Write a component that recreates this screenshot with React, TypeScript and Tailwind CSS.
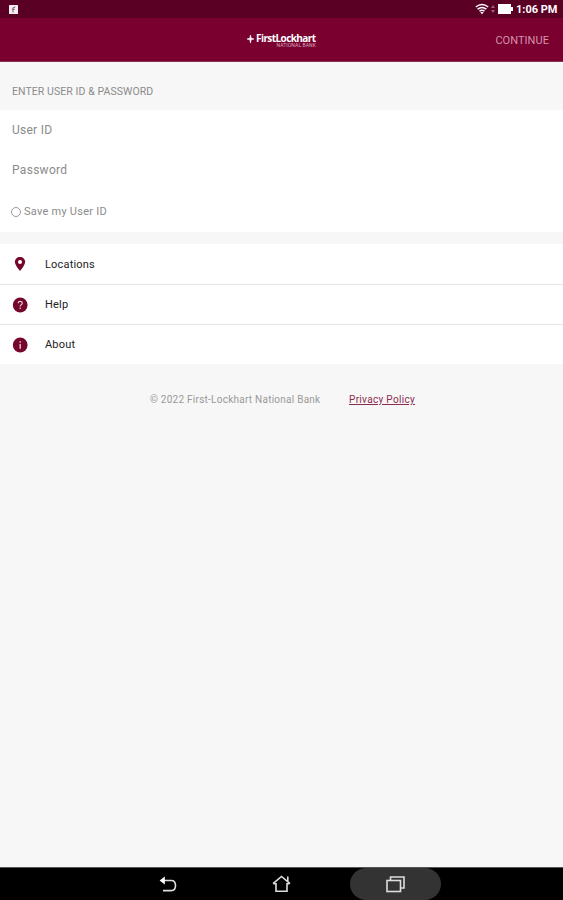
import type { ReactNode } from "react";

function StatusBar() {
  return (
    <div className="flex h-[18px] shrink-0 items-center bg-[#5a0024] pl-[9px] pr-[6px] text-white">
      <svg width="9" height="9" viewBox="0 0 9 9">
        <rect width="9" height="9" rx="0.5" fill="#f7eef2" />
        <path d="M4 7.5V3.2Q4 2.2 6.3 2.2M2.8 4.4H5.7" stroke="#8a7780" strokeWidth="1.2" fill="none" />
      </svg>
      <svg className="ml-auto" width="14" height="12" viewBox="0 0 14 12" fill="none" stroke="#fff" strokeWidth="1.5">
        <path d="M0.8 4Q7-0.8 13.2 4M2.6 6.1Q7 2.7 11.4 6.1M4.5 8.2Q7 6.4 9.5 8.2" />
        <path d="M5.3 9H8.7L7 11.5Z" fill="#fff" stroke="none" />
      </svg>
      <svg className="ml-[2px]" width="4" height="10" viewBox="0 0 4 10" fill="#a0607c">
        <path d="M0 4L2 1L4 4ZM0 6H4L2 9Z" />
      </svg>
      <svg className="ml-[3px]" width="15" height="10" viewBox="0 0 15 10" fill="#fff">
        <path d="M0 0H13V3H15V7H13V10H0Z" />
      </svg>
      <span className="ml-[3px] w-[41px] whitespace-nowrap text-[11px] font-bold leading-none tracking-[0px]">1:06 PM</span>
    </div>
  );
}

function Header() {
  return (
    <header className="grid h-[44px] shrink-0 grid-cols-[1fr_69px_1fr] items-center border-b border-[#8b3152] bg-[#7a0030]">
      <div className="col-start-2 flex items-start gap-[2px]">
        <svg className="mt-[2px] shrink-0" width="7" height="8" viewBox="0 0 7 8">
          <path d="M3.5 0L4.2 3.3L7 4L4.2 4.7L3.5 8L2.8 4.7L0 4L2.8 3.3Z" fill="#fff" stroke="#fff" strokeWidth="0.6" />
        </svg>
        <div className="flex w-[60px] flex-col">
          <span className="whitespace-nowrap font-['Open_Sans',sans-serif] text-[10px] font-bold leading-[10px] tracking-[-0.58px] text-white">FirstLockhart</span>
          <span className="self-end whitespace-nowrap text-[5px] leading-[4px] tracking-[0.1px] text-[#d9a9bd]">NATIONAL BANK</span>
        </div>
      </div>
      <button className="justify-self-end whitespace-nowrap pr-[14px] pt-[2px] text-[11px] leading-none tracking-[0.05px] text-[#d493ad]">CONTINUE</button>
    </header>
  );
}

function Row({ icon, label, size }: { icon: ReactNode; label: string; size: string }) {
  return (
    <a className={`flex items-center bg-white pl-[12px] ${size}`}>
      <span className="flex w-[16px] justify-center">{icon}</span>
      <span className="ml-[17px] text-[11px] leading-none tracking-[0.18px] text-[#222]">{label}</span>
    </a>
  );
}

function Pin() {
  return (
    <svg width="12" height="16" viewBox="0 0 12 16">
      <path d="M6 1C3 1 0.9 3.1 0.9 6C0.9 9.3 6 15 6 15S11.1 9.3 11.1 6C11.1 3.1 9 1 6 1Z" fill="#75072d" />
      <circle cx="6" cy="5.9" r="2" fill="#fff" />
    </svg>
  );
}

function Question() {
  return (
    <svg width="16" height="16" viewBox="0 0 16 16">
      <circle cx="8.2" cy="8" r="7.4" fill="#75072d" />
      <path d="M6.1 6.2Q6.2 4.3 8.2 4.3T10.3 6.1Q10.3 7.2 9.2 7.8Q8.2 8.4 8.2 9.5M8.2 10.6V12" stroke="#e6c8d3" strokeWidth="1.2" fill="none" />
    </svg>
  );
}

function Info() {
  return (
    <svg width="16" height="16" viewBox="0 0 16 16">
      <circle cx="8.2" cy="8" r="7.4" fill="#75072d" />
      <path d="M8.2 4.3V5.7M8.2 7V11.7" stroke="#e6c8d3" strokeWidth="1.4" />
    </svg>
  );
}

function NavBar() {
  return (
    <nav className="grid h-[33px] shrink-0 grid-cols-[122px_91px_137px_91px_1fr] border-t border-[#555] bg-black">
      <button className="col-start-2 flex items-center justify-center">
        <svg width="18" height="17" viewBox="0 0 18 17" fill="none" stroke="#ddd" strokeWidth="1.6">
          <path d="M4 4.5H12.2Q16.5 4.5 16.5 9.5Q16.5 14.6 12.2 14.6H4" />
          <path d="M5.8 0.6L0.6 4.5L5.8 8.4Z" fill="#fff" stroke="none" />
        </svg>
      </button>
      <button className="flex items-center justify-center">
        <svg width="19" height="18" viewBox="0 0 19 18" fill="none" stroke="#ddd" strokeWidth="1.6">
          <path d="M1 8.7L9.5 1.5L18 8.7M1.5 8.7H4V16.3H15V8.7H17.5M15.8 6.5V1.5" />
        </svg>
      </button>
      <button className="flex items-center justify-center rounded-full bg-[#333]">
        <svg width="19" height="17" viewBox="0 0 19 17" fill="none" stroke="#ddd" strokeWidth="1.6">
          <path d="M4.5 4V1H18V12H15" />
          <rect x="1" y="4.5" width="13.5" height="11" />
        </svg>
      </button>
    </nav>
  );
}

export default function App() {
  return (
    <div className="flex h-[900px] w-full flex-col overflow-hidden bg-[#f7f7f7] font-[Roboto,sans-serif]">
      <StatusBar />
      <Header />
      <main className="flex flex-1 flex-col">
        <h2 className="flex h-[48px] items-center pl-[12px] pt-[13px] text-[10.5px] leading-none tracking-[0.08px] text-[#8b8b8b]">ENTER USER ID &amp; PASSWORD</h2>
        <form className="flex h-[122px] flex-col bg-white pl-[12px] text-[12px] text-[#8b8b8b]">
          <label className="flex h-[40px] items-center tracking-[0.25px]">User ID</label>
          <label className="flex h-[40px] items-center tracking-[0.3px]">Password</label>
          <label className="-ml-px flex h-[42px] items-center gap-[4px] pt-px text-[11px] tracking-[0.25px]">
            <span className="size-[10px] rounded-full border border-[#999]" />
            <span className="-ml-px pt-px">Save my User ID</span>
          </label>
        </form>
        <div className="mt-[12px] flex flex-col">
          <Row icon={<Pin />} label="Locations" size="h-[41px] border-b border-[#e6e6e6]" />
          <Row icon={<Question />} label="Help" size="h-[40px] border-b border-[#e6e6e6]" />
          <Row icon={<Info />} label="About" size="h-[39px]" />
        </div>
        <footer className="mt-[30px] flex items-center pl-[150px] text-[10px] leading-[12px]">
          <span className="w-[199px] whitespace-nowrap tracking-[0.25px] text-[#999]">© 2022 First-Lockhart National Bank</span>
          <a className="whitespace-nowrap tracking-[0.32px] text-[#8a2c4e] underline">Privacy Policy</a>
        </footer>
      </main>
      <NavBar />
    </div>
  );
}
